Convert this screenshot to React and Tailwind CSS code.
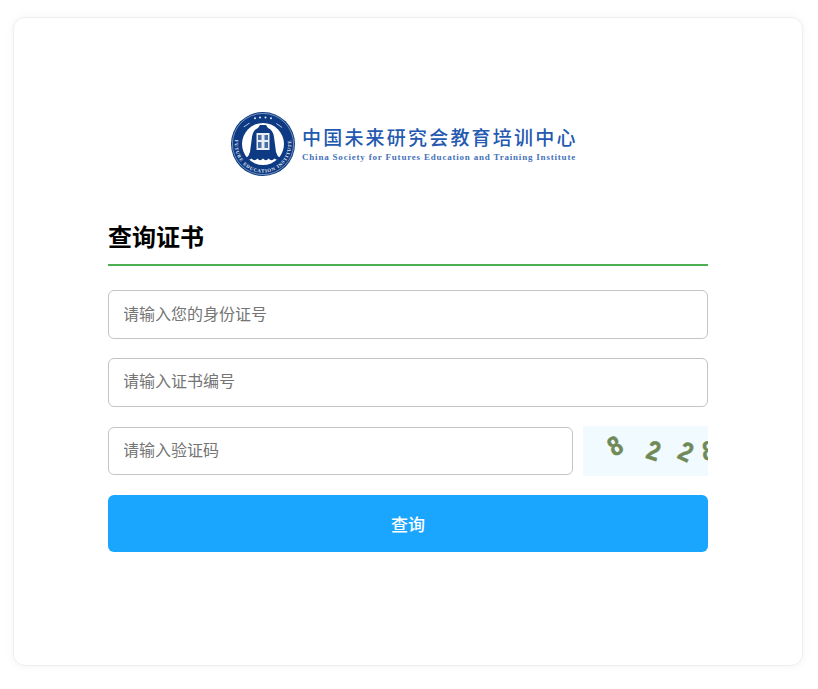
const cjk = "font-['Noto_Sans_CJK_SC','Liberation_Sans',sans-serif]";

const Logo = () => (
  <div className="flex items-center h-[68px] pl-[123px]">
    <svg width="64" height="64" viewBox="0 0 64 64" className="shrink-0">
      <defs>
        <path id="ringText" d="M4.2 27 A28.3 28.3 0 1 0 59.8 27" fill="none" />
      </defs>
      <circle cx="32" cy="32" r="32" fill="#0d3a82" />
      <circle cx="32" cy="32" r="30.6" fill="none" stroke="#dfe8f5" strokeWidth="0.5" />
      <circle cx="32" cy="32" r="21" fill="#fff" />
      <text fontSize="4.8" fontWeight="700" fill="#e6edf8" fontFamily="'Liberation Serif', serif" letterSpacing="0.8">
        <textPath href="#ringText" startOffset="50%" textAnchor="middle">FUTURE EDUCATION INSTITUTE</textPath>
      </text>
      <g fill="#e6edf8">
        <circle cx="24" cy="6.2" r="1" />
        <circle cx="29" cy="5.4" r="1" />
        <circle cx="34.5" cy="5.4" r="1" />
        <circle cx="40" cy="6.2" r="1" />
        <rect x="12" y="13" width="7" height="0.7" transform="rotate(-35 15 13)" />
        <rect x="45" y="13" width="7" height="0.7" transform="rotate(35 48 13)" />
      </g>
      <path d="M29 13 L35 13 L37 16 Q42 18 43 25 L45 40 Q46 44 49 46 Q46 49 43.5 46.5 Q40.5 50 37.5 46.5 Q35 50 32 46.5 Q29 50 26.5 46.5 Q23.5 50 20.5 46.5 Q18 49 15 46 Q18 44 19 40 L21 25 Q22 18 27 16 Z" fill="#0d3a82" />
      <rect x="25.5" y="21" width="13" height="17" fill="#e9edf5" />
      <g fill="#4a6ea6">
        <rect x="27" y="23" width="3.5" height="5" />
        <rect x="33.5" y="23" width="3.5" height="5" />
        <rect x="27" y="30" width="3.5" height="6" />
        <rect x="33.5" y="30" width="3.5" height="6" />
      </g>
    </svg>
    <div className="ml-[7px] text-[#2459b0]">
      <div className={`${cjk} font-medium text-[19px] leading-[24px] tracking-[2.2px] whitespace-nowrap`}>
        中国未来研究会教育培训中心
      </div>
      <div className="font-['Liberation_Serif',serif] font-bold text-[9px] leading-[11px] tracking-[0.8px] whitespace-nowrap mt-[3px] opacity-85">
        China Society for Futures Education and Training Institute
      </div>
    </div>
  </div>
);

const Field = ({ placeholder, className = "" }) => (
  <input
    placeholder={placeholder}
    className={`${className} border border-[#c4c4c4] rounded-md pl-[15px] pr-[15px] -indent-px text-base bg-white outline-none placeholder:text-[#757575] ${cjk}`}
  />
);

const Captcha = () => (
  <div className="flex items-center w-[125px] h-[50px] shrink-0 overflow-hidden pl-[25px] bg-[#f1fafe] font-['Liberation_Sans',sans-serif] font-bold text-[27px] leading-none text-[#6f8a58] [-webkit-text-stroke:0.5px_#6f8a58]">
    <span className="shrink-0 mb-[10px] scale-x-[0.85] -rotate-[28deg]">8</span>
    <span className="shrink-0 ml-[23px] scale-x-[0.85] rotate-[18deg]">2</span>
    <span className="shrink-0 ml-[17px] mt-[2px] scale-x-[0.85] rotate-[25deg]">2</span>
    <span className="shrink-0 ml-[8px] scale-x-[0.85] -rotate-[5deg]">8</span>
  </div>
);

export default function App() {
  return (
    <div className={`bg-white min-h-[689px] pt-[17px] px-[13px] ${cjk}`}>
      <div className="w-[790px] h-[649px] bg-white border border-[#eeeeee] rounded-xl shadow-[0_0_10px_rgba(0,0,0,0.05)] pt-[92px]">
        <div className="w-[600px] mx-auto">
          <Logo />
          <h1 className="mt-[42px] text-2xl leading-[32px] font-bold text-black">查询证书</h1>
          <div className="mt-[12px] h-[2px] bg-[#4caf50]" />
          <Field placeholder="请输入您的身份证号" className="block w-full h-[49px] mt-[24px] pb-[4px]" />
          <Field placeholder="请输入证书编号" className="block w-full h-[49px] mt-[19px] pb-[5px]" />
          <div className="flex items-center gap-[10px] mt-[19px]">
            <Field placeholder="请输入验证码" className="flex-1 min-w-0 h-[48px] pb-[5px]" />
            <Captcha />
          </div>
          <button className="block w-full h-[57px] mt-[19px] rounded-md bg-[#1aa5ff] text-white text-[17px] font-medium">
            查询
          </button>
        </div>
      </div>
    </div>
  );
}
